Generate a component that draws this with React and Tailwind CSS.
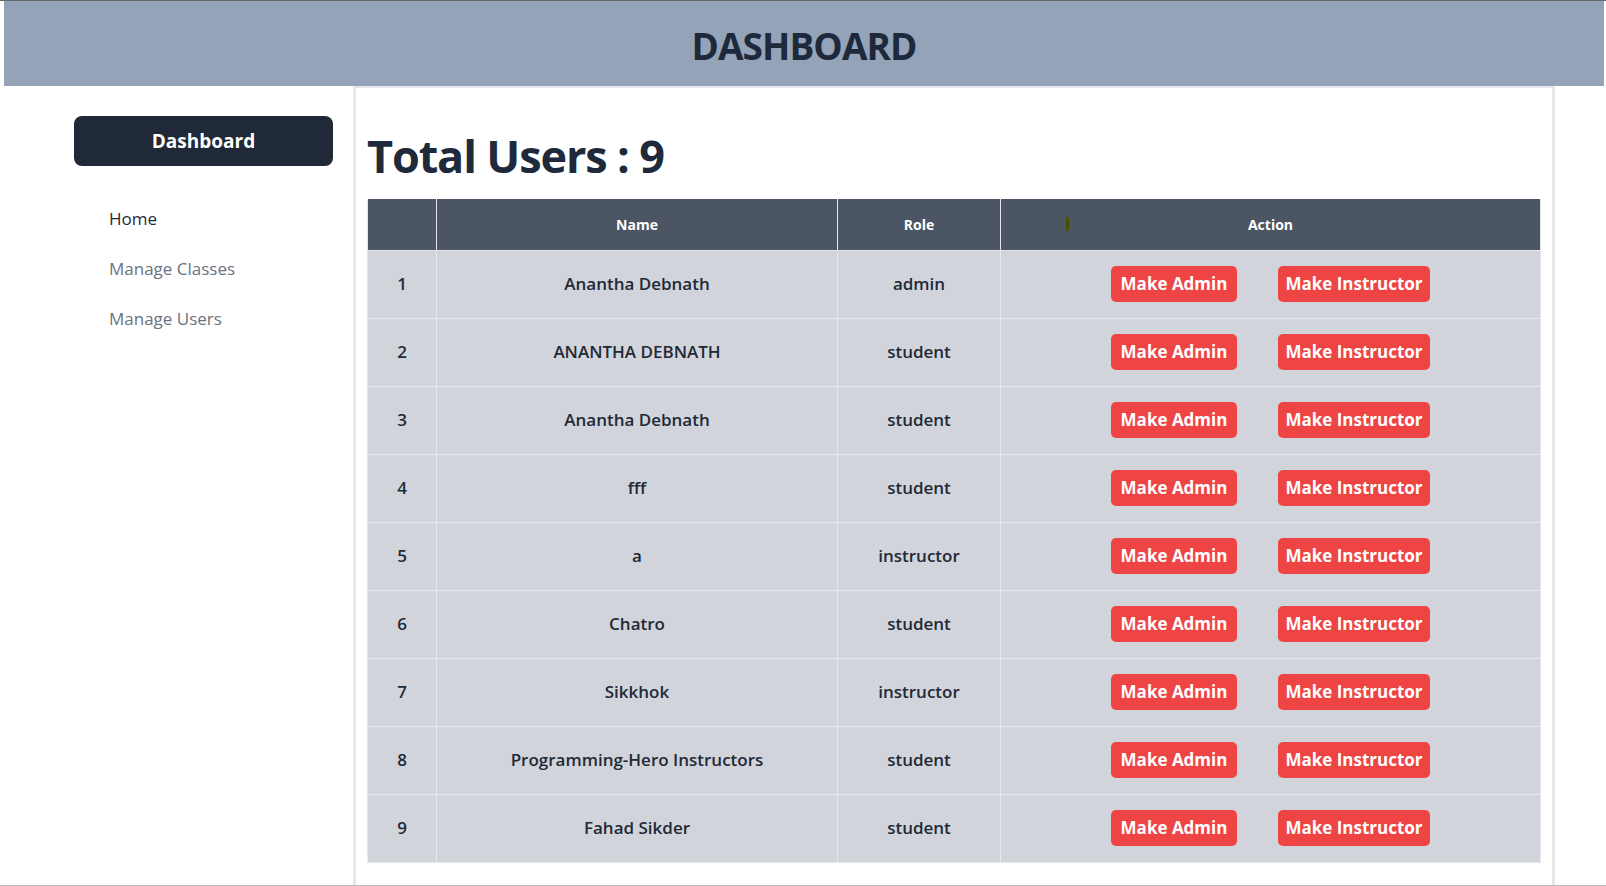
const users = [
    { name: 'Anantha Debnath', role: 'admin' },
    { name: 'ANANTHA DEBNATH', role: 'student' },
    { name: 'Anantha Debnath', role: 'student' },
    { name: 'fff', role: 'student' },
    { name: 'a', role: 'instructor' },
    { name: 'Chatro', role: 'student' },
    { name: 'Sikkhok', role: 'instructor' },
    { name: 'Programming-Hero Instructors', role: 'student' },
    { name: 'Fahad Sikder', role: 'student' },
];

export default function App() {
    return (
        <div className="min-h-screen h-[886px] flex flex-col bg-white border-t border-[#666] border-b border-b-[#bdbdbd] overflow-hidden" style={{ fontFamily: '"Open Sans", "Noto Sans", sans-serif' }}>
            <header className="ml-1 mr-[2px] h-[85px] shrink-0 bg-[#94a3b8] flex items-center justify-center pt-[4px]">
                <h1 className="text-[37px] font-bold text-[#1e293b] tracking-tight">DASHBOARD</h1>
            </header>

            <div className="flex flex-1 min-h-0">
                <aside className="w-[353px] shrink-0 pl-[74px] pt-[30px]">
                    <button className="w-[259px] h-[50px] bg-[#1f2937] text-white text-[19px] font-bold rounded-lg pt-[1px]">
                        Dashboard
                    </button>
                    <nav className="mt-[41px] pl-[35px] flex flex-col gap-[26px] text-[17px]">
                        <a className="text-[#1f2937] leading-6">Home</a>
                        <a className="text-[#6b7280] leading-6">Manage Classes</a>
                        <a className="text-[#6b7280] leading-6">Manage Users</a>
                    </nav>
                </aside>

                <main className="w-[1202px] shrink-0 border-x-[3px] border-t-2 border-[#e5e7eb] px-[11px] pt-[38px]">
                    <h2 className="text-[45px] leading-[60px] font-bold text-[#1e293b] tracking-tight mb-[13px]">Total Users : 9</h2>

                    <table className="w-[1174px] border-collapse text-center table-fixed">
                        <thead>
                            <tr className="bg-[#4b5563] text-white text-[14px] font-bold h-[51px]">
                                <th className="w-[69px] border-x border-[#e5e7eb]"></th>
                                <th className="w-[401px] border-x border-[#e5e7eb]">Name</th>
                                <th className="w-[163px] border-x border-[#e5e7eb]">Role</th>
                                <th className="relative border-x border-[#e5e7eb]">
                                    <span className="absolute left-[65px] top-[18px] w-[3px] h-[14px] bg-[#4d5000]"></span>
                                    Action
                                </th>
                            </tr>
                        </thead>
                        <tbody>
                            {users.map((user, i) => (
                                <tr key={i} className="bg-[#d1d5db] h-[68px] text-[17px] font-semibold text-[#1f2937]">
                                    <td className="border border-[#e5e7eb]">{i + 1}</td>
                                    <td className="border border-[#e5e7eb]">{user.name}</td>
                                    <td className="border border-[#e5e7eb]">{user.role}</td>
                                    <td className="border border-[#e5e7eb]">
                                        <div className="flex items-center justify-center gap-[41px]">
                                            <button className="w-[126px] h-[36px] bg-[#ef4444] text-white text-[17px] font-bold rounded-[5px]">Make Admin</button>
                                            <button className="w-[152px] h-[36px] bg-[#ef4444] text-white text-[17px] font-bold rounded-[5px]">Make Instructor</button>
                                        </div>
                                    </td>
                                </tr>
                            ))}
                        </tbody>
                    </table>
                </main>
            </div>
        </div>
    );
}
